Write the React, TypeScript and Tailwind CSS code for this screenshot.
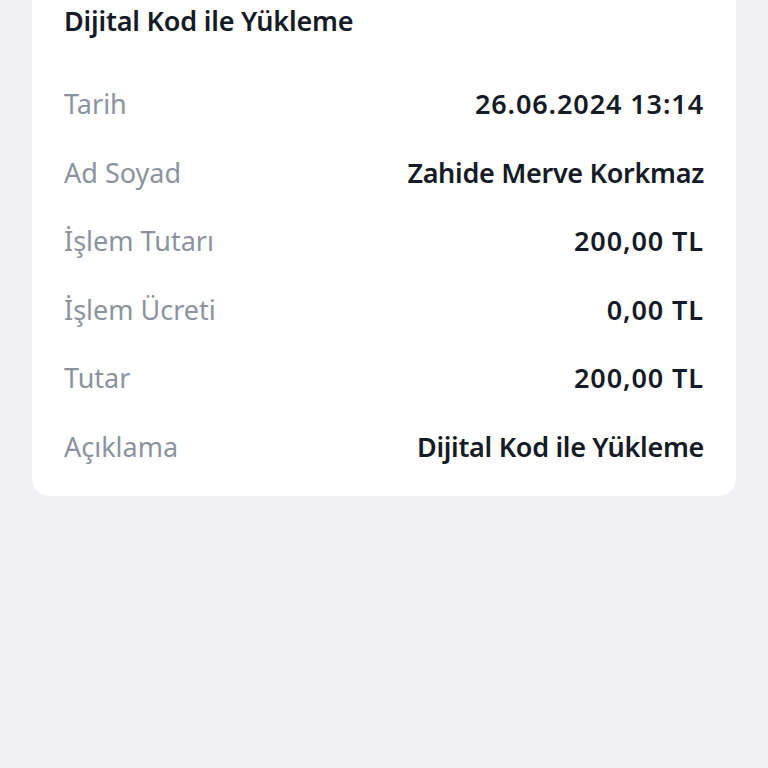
import React from "react";

const rows: [string, string, boolean][] = [
  ["Tarih", "26.06.2024 13:14", true],
  ["Ad Soyad", "Zahide Merve Korkmaz", false],
  ["İşlem Tutarı", "200,00 TL", true],
  ["İşlem Ücreti", "0,00 TL", true],
  ["Tutar", "200,00 TL", true],
  ["Açıklama", "Dijital Kod ile Yükleme", false],
];

export default function App() {
  return (
    <div
      className="w-[768px] h-[768px] bg-[#efeff4] px-[32px]"
      style={{ fontFamily: '"Noto Sans", "Open Sans", sans-serif' }}
    >
      <div className="bg-white rounded-b-[18px] px-[32px] pb-[14px]">
        <div className="h-[42px] flex items-center text-[27px] font-semibold text-[#141a26] tracking-[-0.2px]">
          Dijital Kod ile Yükleme
        </div>
        <div className="mt-[28px] flex flex-col">
          {rows.map(([l, v, num]) => (
            <div key={l} className="h-[68.6px] flex items-center justify-between">
              <span className="text-[27px] text-[#8b939f]">{l}</span>
              <span
                className={
                  num
                    ? "text-[27px] font-semibold text-[#141a26] tracking-[0.9px]"
                    : "text-[27px] font-semibold text-[#141a26] tracking-[-0.3px]"
                }
              >
                {v}
              </span>
            </div>
          ))}
        </div>
      </div>
    </div>
  );
}
